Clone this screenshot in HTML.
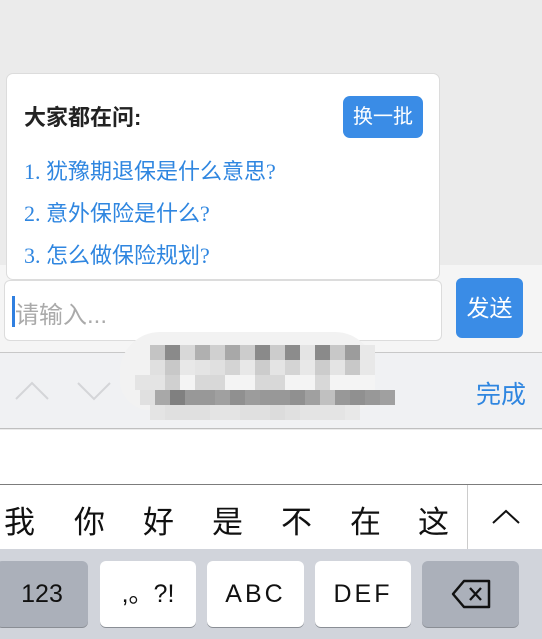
<!DOCTYPE html>
<html><head><meta charset="utf-8"><style>
*{margin:0;padding:0;box-sizing:border-box}
body{width:542px;height:639px;overflow:hidden;background:#ebebeb;font-family:"Liberation Sans","Noto Sans CJK SC",sans-serif;position:relative}
.a{position:absolute}
.card{left:6px;top:73px;width:434px;height:207px;background:#fff;border:1px solid #dcdcdc;border-radius:7px}
.q{color:#2f86e0;font-size:22px;font-family:"Liberation Serif","Noto Sans CJK SC",serif;left:24px;white-space:nowrap}
.key{background:#fff;border-radius:6px;box-shadow:0 1px 0 #8a8e95;height:66px;top:561px;text-align:center;line-height:66px;font-size:25px;color:#111}
.gk{background:#abb0ba}
.cand{top:497px;font-size:31px;color:#111}
</style></head><body>
<div class="a" style="left:0;top:265px;width:542px;height:88px;background:#f5f5f5"></div>
<div class="a card"></div>
<div class="a" style="left:24px;top:100px;font-size:22px;font-weight:bold;color:#222;white-space:nowrap">大家都在问:</div>
<div class="a" style="left:343px;top:96px;width:80px;height:42px;background:#3a8ce6;border-radius:7px;color:#fff;font-size:20px;text-align:center;line-height:42px">换一批</div>
<div class="a q" style="top:154px">1. 犹豫期退保是什么意思?</div>
<div class="a q" style="top:196px">2. 意外保险是什么?</div>
<div class="a q" style="top:238px">3. 怎么做保险规划?</div>
<div class="a" style="left:4px;top:280px;width:438px;height:61px;background:#fff;border:1px solid #dcdcdc;border-radius:6px"></div>
<div class="a" style="left:12px;top:296px;width:3px;height:31px;background:#2f7fe0"></div>
<div class="a" style="left:15px;top:295px;font-size:24px;color:#aaa">请输入...</div>
<div class="a" style="left:456px;top:278px;width:67px;height:60px;background:#3a8ce6;border-radius:6px;color:#fff;font-size:23px;text-align:center;line-height:60px">发送</div>
<div class="a" style="left:0;top:352px;width:542px;height:77px;background:#f0f1f3;border-top:1px solid #c8c8c8;border-bottom:1px solid #bfbfbf"></div>
<svg class="a" style="left:12px;top:375px" width="100" height="30"><path d="M4 24 L20 8 L36 24 M66 8 L82 24 L98 8" fill="none" stroke="#d4d5d8" stroke-width="2"/></svg>
<div class="a" style="left:476px;top:375px;font-size:25px;color:#2f86e0">完成</div>
<div class="a" style="left:0;top:430px;width:542px;height:54px;background:#fff"></div>
<div class="a" style="left:0;top:484px;width:542px;height:65px;background:#fff;border-top:1px solid #7c7c7c"></div>
<div class="a" style="left:467px;top:485px;width:1px;height:64px;background:#ccc"></div>
<div class="a cand" style="left:4px">我</div>
<div class="a cand" style="left:74px">你</div>
<div class="a cand" style="left:143px">好</div>
<div class="a cand" style="left:212px">是</div>
<div class="a cand" style="left:281px">不</div>
<div class="a cand" style="left:350px">在</div>
<div class="a cand" style="left:418px">这</div>
<svg class="a" style="left:490px;top:506px" width="34" height="20"><path d="M3 17 L16 5 L29 17" fill="none" stroke="#111" stroke-width="2"/></svg>
<div class="a" style="left:0;top:549px;width:542px;height:90px;background:#d1d4db"></div>
<div class="a key gk" style="left:-4px;width:92px">123</div>
<div class="a key" style="left:100px;width:96px">,。?!</div>
<div class="a key" style="left:207px;width:97px;letter-spacing:3px">ABC</div>
<div class="a key" style="left:315px;width:96px;letter-spacing:3px">DEF</div>
<div class="a key gk" style="left:422px;width:97px"></div>
<svg class="a" style="left:450px;top:578px" width="42" height="32"><path d="M14 3 H39 V29 H14 L3 16 Z" fill="none" stroke="#111" stroke-width="2.5" stroke-linejoin="round"/><path d="M20 10 L31 22 M31 10 L20 22" stroke="#111" stroke-width="2.3"/></svg>
<div class="a" style="left:120px;top:332px;width:255px;height:78px;background:#f2f2f2;border-radius:40px 40px 20px 30px"></div>
<div id="g" class="a" style="left:0;top:0"></div>
<script>
var rows=[[345,150,["c4","8a","d8","b0","d0","a8","cc","8a","cc","8c","e4","8a","c8","9c","e8"]],
[360,150,["e0","c8","e8","e4","e0","d4","e8","cc","e4","d4","e8","cc","e4","c8","e8"]],
[375,135,["e4","e4","d0","f4","d8","d8","f4","f4","d8","d8","f4","f4","d8","f4","f4","f4"]],
[390,140,["e0","a8","80","98","98","a0","90","9c","98","98","90","a0","c0","98","90","98","a0"]],
[405,150,["e4","e0","e0","e0","e4","e4","e0","e0","dc","e0","e4","e4","e4","e8"]]];
var h="";rows.forEach(function(r){r[2].forEach(function(c,i){h+='<div style="position:absolute;left:'+(r[1]+i*15)+'px;top:'+r[0]+'px;width:15px;height:15px;background:#'+c+c.charAt(0)+c.charAt(1)+c+'"></div>';});});
document.getElementById("g").innerHTML=h;
</script>
</body></html>
